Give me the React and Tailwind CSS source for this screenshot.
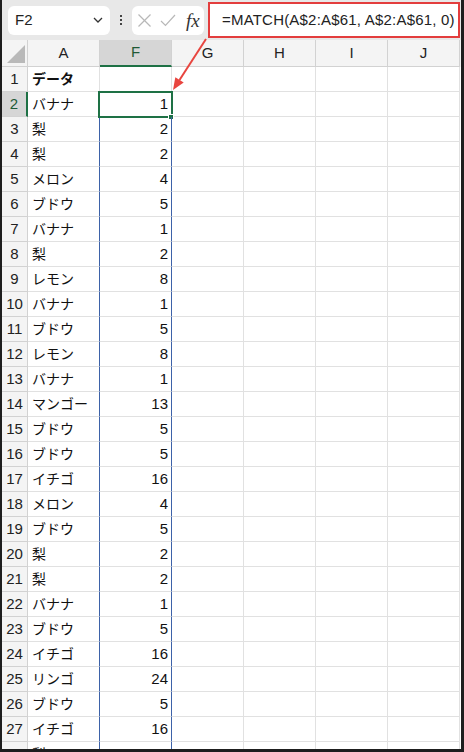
import React from "react";

const data = [
  ["データ", null],
  ["バナナ", 1],
  ["梨", 2],
  ["梨", 2],
  ["メロン", 4],
  ["ブドウ", 5],
  ["バナナ", 1],
  ["梨", 2],
  ["レモン", 8],
  ["バナナ", 1],
  ["ブドウ", 5],
  ["レモン", 8],
  ["バナナ", 1],
  ["マンゴー", 13],
  ["ブドウ", 5],
  ["ブドウ", 5],
  ["イチゴ", 16],
  ["メロン", 4],
  ["ブドウ", 5],
  ["梨", 2],
  ["梨", 2],
  ["バナナ", 1],
  ["ブドウ", 5],
  ["イチゴ", 16],
  ["リンゴ", 24],
  ["ブドウ", 5],
  ["イチゴ", 16],
  ["梨", 2],
];

function Toolbar() {
  return (
    <div className="h-[40px] shrink-0 bg-[#e8e8e8] flex items-center pl-[6px]">
      <div className="w-[102px] h-[29px] rounded-[6px] bg-white flex items-center justify-between pl-[7px] pr-[6px]">
        <span className="text-[15px] text-[#222]">F2</span>
        <svg width="12" height="12" viewBox="0 0 12 12">
          <polyline points="2,4 6,8 10,4" fill="none" stroke="#333" strokeWidth="1.3" />
        </svg>
      </div>
      <div className="w-[22px] flex flex-col items-center gap-[2px]">
        <div className="w-[2px] h-[2px] bg-[#444]" />
        <div className="w-[2px] h-[2px] bg-[#444]" />
        <div className="w-[2px] h-[2px] bg-[#444]" />
      </div>
      <div className="w-[72px] h-[29px] rounded-[6px] bg-white flex items-center pl-[5px]">
        <svg width="15" height="15" viewBox="0 0 15 15">
          <line x1="1.5" y1="1.5" x2="13.5" y2="13.5" stroke="#b8b8b8" strokeWidth="1.2" />
          <line x1="13.5" y1="1.5" x2="1.5" y2="13.5" stroke="#b8b8b8" strokeWidth="1.2" />
        </svg>
        <svg width="16" height="15" viewBox="0 0 16 15" className="ml-[8px]">
          <polyline points="1,8 5.5,12.5 15,2" fill="none" stroke="#b8b8b8" strokeWidth="1.2" />
        </svg>
        <span className="ml-[10px] italic text-[19px] leading-none text-[#333] font-['Liberation_Serif',serif]">fx</span>
      </div>
      <div className="ml-[4px] w-[252px] h-[36px] border-2 border-[#e33d3d] bg-white flex items-center pl-[12px]">
        <span className="text-[15px] tracking-[0.2px] text-[#222] whitespace-nowrap">=MATCH(A$2:A$61, A$2:A$61, 0)</span>
      </div>
    </div>
  );
}

function HeaderRow() {
  const cols = ["A", "F", "G", "H", "I", "J"];
  return (
    <div className="h-[27px] shrink-0 flex bg-[#f4f4f4]">
      <div className="w-[26px] h-full border-r border-b border-[#d2d2d2] flex items-end justify-end pb-[3px] pr-[2px]">
        <svg width="18" height="18" viewBox="0 0 18 18">
          <polygon points="18,0 18,18 0,18" fill="#b9b9b9" />
        </svg>
      </div>
      {cols.map((c) =>
        c === "F" ? (
          <div
            key={c}
            className="w-[72px] h-full bg-[#d6d6d6] border-r border-[#d2d2d2] border-b-2 border-b-[#1e7145] flex items-center justify-center text-[15px] text-[#1f5a36]"
          >
            {c}
          </div>
        ) : (
          <div
            key={c}
            className="w-[72px] h-full border-r border-b border-[#d2d2d2] flex items-center justify-center text-[15px] text-[#222]"
          >
            {c}
          </div>
        )
      )}
    </div>
  );
}

function Row({ idx, name, val }) {
  const n = idx + 1;
  const selected = n === 2;
  const blue = n >= 3;
  return (
    <div className="h-[25px] shrink-0 flex">
      {selected ? (
        <div className="w-[26px] h-full bg-[#d6d6d6] border-b border-[#d2d2d2] border-r-2 border-r-[#1e7145] flex items-center justify-center text-[15px] text-[#1f5a36]">
          {n}
        </div>
      ) : (
        <div className="w-[26px] h-full bg-[#f4f4f4] border-r border-b border-[#d2d2d2] flex items-center justify-center text-[15px] text-[#222]">
          {n}
        </div>
      )}
      <div
        className={
          blue
            ? "w-[72px] h-full border-b border-[#e1e1e1] border-r border-r-[#3d62a8] flex items-center pl-[4px] text-[14px] text-[#111] whitespace-nowrap"
            : "w-[72px] h-full border-b border-r border-[#e1e1e1] flex items-center pl-[4px] text-[14px] text-[#111] whitespace-nowrap"
        }
      >
        <span className={n === 1 ? "font-bold" : ""}>{name}</span>
      </div>
      <div
        className={
          blue
            ? "relative w-[72px] h-full border-b border-[#e1e1e1] border-r border-r-[#3d62a8] flex items-center justify-end pr-[3px] text-[15px] text-[#111]"
            : "relative w-[72px] h-full border-b border-r border-[#e1e1e1] flex items-center justify-end pr-[3px] text-[15px] text-[#111]"
        }
      >
        {val !== null ? val : ""}
        {selected && (
          <div className="absolute left-[-2px] top-[-1px] w-[75px] h-[27px] border-2 border-[#1e7145]">
            <div className="absolute left-[68px] top-[21px] w-[6px] h-[6px] bg-[#1e7145] border border-white" />
          </div>
        )}
      </div>
      {[0, 1, 2, 3].map((k) => (
        <div key={k} className="w-[72px] h-full border-b border-r border-[#e1e1e1]" />
      ))}
    </div>
  );
}

export default function App() {
  return (
    <div className="relative w-[464px] h-[752px] bg-[#1e1e1e] pl-[2px] pr-[3px] pb-[3px] overflow-hidden font-['Liberation_Sans','Noto_Sans_CJK_JP',sans-serif]">
      <div className="w-full h-full bg-white flex flex-col overflow-hidden">
        <Toolbar />
        <HeaderRow />
        {data.map(([name, val], i) => (
          <Row key={i} idx={i} name={name} val={val} />
        ))}
      </div>
      <svg className="absolute left-0 top-0 pointer-events-none" width="464" height="752" viewBox="0 0 464 752">
        <line x1="206" y1="39" x2="179.5" y2="80" stroke="#e8453f" strokeWidth="2" />
        <polygon points="173,90 183.7,82.6 175.3,77.2" fill="#e8453f" />
      </svg>
    </div>
  );
}
